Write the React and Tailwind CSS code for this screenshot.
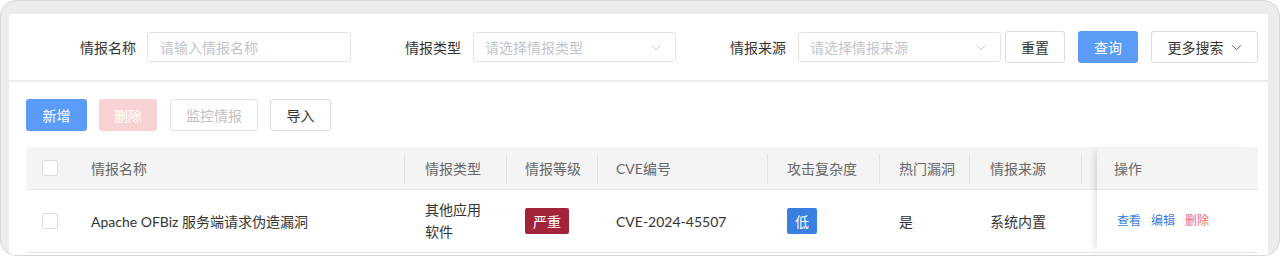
import React from "react";

const font = { fontFamily: '"Lato", "Noto Sans CJK SC", "Noto Sans", sans-serif' };

function Chevron({ className }) {
  return (
    <svg viewBox="0 0 12 8" className={className} fill="none" stroke="currentColor" strokeWidth="1.1">
      <path d="M1 1.5 L6 6.5 L11 1.5" />
    </svg>
  );
}

function Divider() {
  return <span className="absolute right-0 top-[7px] h-[30px] w-px bg-[#e2e2e2]" />;
}

function Checkbox() {
  return <span className="block h-[16px] w-[16px] rounded-[2px] border border-[#dcdcdc] bg-white" />;
}

export default function App() {
  const cols = [
    { label: "情报类型", w: "w-[102px]", pl: "pl-[20px]" },
    { label: "情报等级", w: "w-[91px]", pl: "pl-[18px]" },
    { label: "CVE编号", w: "w-[170px]", pl: "pl-[18px]" },
    { label: "攻击复杂度", w: "w-[112px]", pl: "pl-[19px]" },
    { label: "热门漏洞", w: "w-[90px]", pl: "pl-[19px]" },
    { label: "情报来源", w: "w-[112px]", pl: "pl-[20px]" },
  ];
  return (
    <div style={font} className="w-[1280px] h-[256px] overflow-hidden rounded-[16px] border border-[#d6d6d6] bg-[#ececec] pt-[13px] pl-[8px] pr-[11px] flex flex-col gap-[2px] text-[14px] text-[#333]">
      {/* search panel */}
      <div className="h-[66px] shrink-0 bg-white flex items-center pl-[71px]">
        <span className="w-[56px] whitespace-nowrap">情报名称</span>
        <div className="ml-[11px] h-[30px] w-[204px] rounded-[3px] border border-[#e3e3e3] flex items-center pl-[12px] text-[#c0c4cc]">请输入情报名称</div>
        <span className="ml-[54px] w-[56px] whitespace-nowrap">情报类型</span>
        <div className="ml-[12px] h-[30px] w-[203px] rounded-[3px] border border-[#e3e3e3] flex items-center justify-between pl-[11px] pr-[13px] text-[#c0c4cc]">
          <span>请选择情报类型</span>
          <Chevron className="w-[12px] h-[7px] text-[#c0c4cc]" />
        </div>
        <span className="ml-[54px] w-[56px] whitespace-nowrap">情报来源</span>
        <div className="ml-[12px] h-[30px] w-[203px] rounded-[3px] border border-[#e3e3e3] flex items-center justify-between pl-[11px] pr-[13px] text-[#c0c4cc]">
          <span>请选择情报来源</span>
          <Chevron className="w-[12px] h-[7px] text-[#c0c4cc]" />
        </div>
        <button className="ml-[4px] h-[32px] w-[60px] rounded-[3px] border border-[#dcdcdc] bg-white text-[#333]">重置</button>
        <button className="ml-[13px] h-[32px] w-[60px] rounded-[3px] bg-[#5b9cf8] text-white">查询</button>
        <button className="ml-[13px] h-[32px] w-[107px] rounded-[3px] border border-[#dcdcdc] bg-white text-[#333] flex items-center justify-center gap-[7px]">
          <span>更多搜索</span>
          <Chevron className="w-[11px] h-[7px] text-[#555]" />
        </button>
      </div>

      {/* table panel */}
      <div className="flex-1 bg-white pl-[17px] pt-[17px]">
        <div className="flex">
          <button className="h-[32px] w-[61px] rounded-[3px] bg-[#5b9cf8] text-white">新增</button>
          <button className="ml-[12px] h-[32px] w-[58px] rounded-[3px] bg-[#f9d3d3] text-white">删除</button>
          <button className="ml-[13px] h-[32px] w-[88px] rounded-[3px] border border-[#e2e2e2] bg-white text-[#c0c0c0]">监控情报</button>
          <button className="ml-[12px] h-[32px] w-[61px] rounded-[3px] border border-[#dcdcdc] bg-white text-[#333]">导入</button>
        </div>

        <div className="mt-[16px] w-[1232px] flex">
          <div className="flex-1 flex flex-col">
            {/* header */}
            <div className="flex h-[43px] bg-[#f4f4f5] border-b border-[#e6e6e6] text-[#666]">
              <div className="w-[48px] flex items-center justify-center"><Checkbox /></div>
              <div className="relative w-[331px] flex items-center pl-[17px]">情报名称<Divider /></div>
              {cols.map((c) => (
                <div key={c.label} className={`relative ${c.w} ${c.pl} flex items-center`}>{c.label}<Divider /></div>
              ))}
              <div className="w-[15px]" />
            </div>
            {/* row */}
            <div className="flex h-[63px] border-b border-[#e6e6e6]">
              <div className="w-[48px] flex items-center justify-center"><Checkbox /></div>
              <div className="w-[331px] flex items-center pl-[17px]">Apache OFBiz 服务端请求伪造漏洞</div>
              <div className="w-[102px] pl-[20px] flex flex-col justify-center leading-[22px]">
                <span>其他应用</span>
                <span>软件</span>
              </div>
              <div className="w-[91px] pl-[18px] flex items-center">
                <span className="h-[26px] w-[44px] rounded-[2px] bg-[#a3243a] text-white flex items-center justify-center">严重</span>
              </div>
              <div className="w-[170px] pl-[18px] flex items-center">CVE-2024-45507</div>
              <div className="w-[112px] pl-[19px] flex items-center">
                <span className="h-[26px] w-[30px] rounded-[2px] bg-[#3a80e0] text-white flex items-center justify-center">低</span>
              </div>
              <div className="w-[90px] pl-[19px] flex items-center">是</div>
              <div className="w-[112px] pl-[20px] flex items-center">系统内置</div>
              <div className="w-[15px]" />
            </div>
          </div>
          {/* fixed action column */}
          <div className="w-[161px] flex flex-col shadow-[-6px_0_8px_-5px_rgba(0,0,0,0.18)]">
            <div className="h-[43px] bg-[#f4f4f5] border-b border-[#e6e6e6] flex items-center pl-[17px] text-[#666]">操作</div>
            <div className="h-[63px] border-b border-[#e6e6e6] flex items-center pl-[20px] gap-[10px] text-[12px]">
              <span className="text-[#3a7fe0]">查看</span>
              <span className="text-[#3a7fe0]">编辑</span>
              <span className="text-[#ec6b6b]">删除</span>
            </div>
          </div>
        </div>
      </div>
    </div>
  );
}
